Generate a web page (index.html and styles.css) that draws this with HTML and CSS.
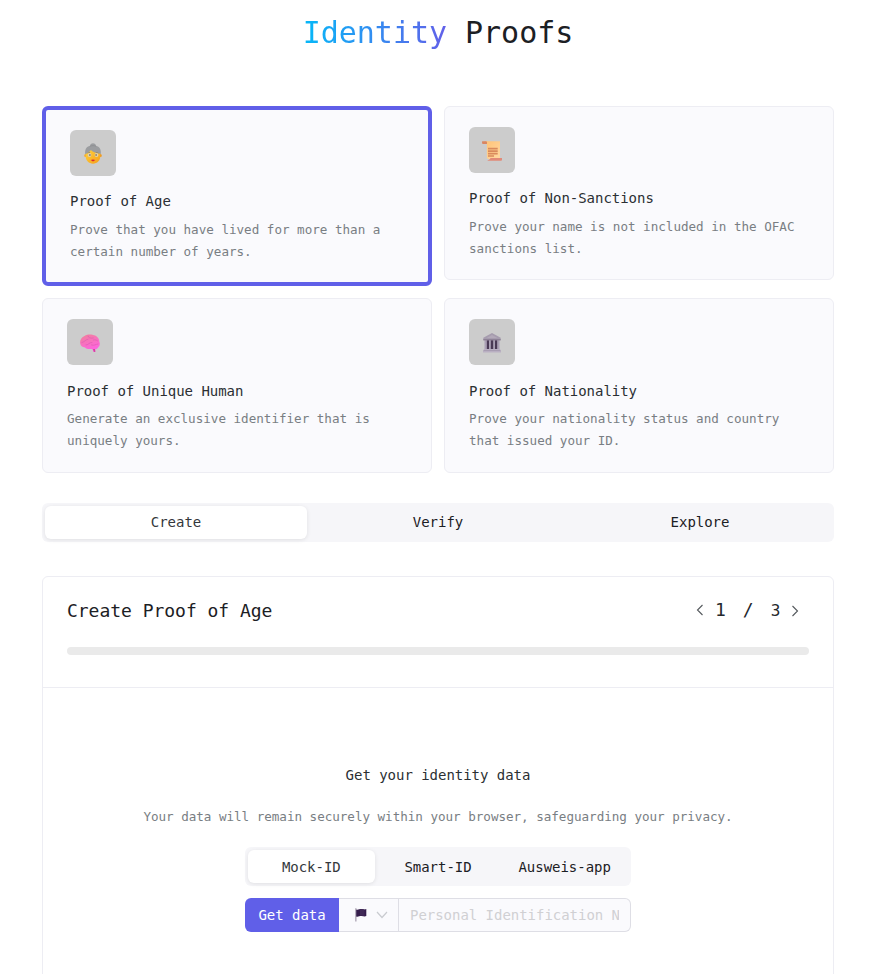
FILE: index.html
```html
<!DOCTYPE html>
<html lang="en">
<head>
<meta charset="utf-8">
<title>Identity Proofs</title>
<link rel="stylesheet" href="styles.css">
</head>
<body>
<main class="page">
  <h1 class="title"><span class="gradient">Identity</span> Proofs</h1>

  <section class="proofs">
    <article class="card selected">
      <div class="avatar">
        <svg width="20" height="22" viewBox="0 0 20 22">
          <defs><linearGradient id="face" x1="0" y1="0" x2="1" y2="1"><stop offset="0" stop-color="#ffd23c"/><stop offset="1" stop-color="#f59e1c"/></linearGradient></defs>
          <path d="M2.300 11.500C1.500 6.500 3.500 3.500 7 2.700 7.500 1 8.600.3 10 .3s2.500.7 3 2.400c3.500.8 5.500 3.800 4.700 8.800z" fill="#9b9da0"/>
          <path d="M7 3.200c2-.7 4-.7 6 0" fill="none" stroke="#88898d" stroke-width=".7"/>
          <ellipse cx="2.300" cy="12.400" rx="1" ry="1.500" fill="#f7a928"/><ellipse cx="17.700" cy="12.400" rx="1" ry="1.500" fill="#ef981e"/>
          <path d="M2.700 11C5 10.200 6.800 8.800 7.800 7c2.300 2.300 5.500 3.400 9.500 3.800v2.500c0 4.200-3.100 7.400-7.300 7.400s-7.300-3.200-7.300-7.400z" fill="url(#face)"/>
          <path d="M4.700 10.100l2.400-.7M12.900 9.400l2.400.7" stroke="#9c8b6a" stroke-width="1"/>
          <circle cx="6.500" cy="12" r="1.900" fill="#dfd2ae"/><circle cx="13.500" cy="12" r="1.900" fill="#dfd2ae"/>
          <circle cx="6.900" cy="12" r=".8" fill="#65513f"/><circle cx="13.100" cy="12" r=".8" fill="#65513f"/>
          <path d="M7.700 17l2.300-.6 2.300.6-2.300 1.400z" fill="#d82537"/>
        </svg>
      </div>
      <h2>Proof of Age</h2>
      <p>Prove that you have lived for more than a certain number of years.</p>
    </article>
    <article class="card">
      <div class="avatar">
        <svg width="20" height="22" viewBox="0 0 20 22">
          <defs><linearGradient id="paper" x1="0" y1="0" x2="1" y2="1"><stop offset="0" stop-color="#ffc274"/><stop offset="1" stop-color="#ffd8a2"/></linearGradient></defs>
          <path d="M2 1.200h16V19H6.500c-1 0-1.600-.6-1.600-1.700V4z" fill="url(#paper)"/>
          <path d="M.2 1.200h3.600c.8 0 1.200.6 1.200 1.300V4H1.500C.5 4 0 3.300 0 2.400z" fill="#d98663"/>
          <path d="M5 20.500c1 0 3.200-.9 3.500-2.500H20v1.400c0 .8-.5 1.400-1.300 1.400H6.500z" fill="#e18a78"/>
          <path d="M6 8.700h9.700M6 11.200h9.700M6 13.600h9.700M6 16h6" stroke="#d98a5c" stroke-width="1.700"/>
        </svg>
      </div>
      <h2>Proof of Non-Sanctions</h2>
      <p>Prove your name is not included in the OFAC sanctions list.</p>
    </article>
    <article class="card">
      <div class="avatar">
        <svg width="20" height="22" viewBox="0 0 20 22">
          <defs><linearGradient id="brain" x1="0" y1="0" x2=".4" y2="1"><stop offset="0" stop-color="#f08298"/><stop offset="1" stop-color="#ff62e3"/></linearGradient></defs>
          <path d="M.2 11.500C-.4 8 1.600 5 4.500 3.900 7 2.300 11.800 2.100 14 3.300c3 .5 5.200 3.200 5.300 6.200 1.100 2.200.5 4.800-1.400 6.200-.8 1.200-1.900 1.700-3 1.600l.5 2.500-1.600.3-1.700-3.200c-3.400.3-6.100 0-7-1.500C2.100 15.400.6 13.700.2 11.500z" fill="url(#brain)"/>
          <path d="M2 10.500c3-.7 3.500-3 6-3.300M8 4c.4 2 2.500 2.500 5.300 2M6 13c2 .6 2.600-2.600 6-2.600M11.500 13c3 .9 4-.7 6.500-1M13.500 8c2-.5 3 .1 4 .8" fill="none" stroke="#e060b4" stroke-width=".8" stroke-linecap="round"/>
          <path d="M13 16.900l2 .1.400 2.800-1.500.3z" fill="#d6409f"/>
        </svg>
      </div>
      <h2>Proof of Unique Human</h2>
      <p>Generate an exclusive identifier that is uniquely yours.</p>
    </article>
    <article class="card">
      <div class="avatar">
        <svg width="20" height="22" viewBox="0 0 20 22">
          <path d="M3 8h14v10H3z" fill="#75677f"/>
          <path d="M5 8h2v10H5zM9 8h2v10H9zM13 8h2v10h-2z" fill="#493955"/>
          <path d="M2.500 8h2.200v10H2.500zM7 8h1.700v10H7zM11.300 8H13v10h-1.700zM15.300 8h2.200v10h-2.200z" fill="#aaa0b5"/>
          <path d="M10 1l8.700 4.800v2.500H1.300V5.800z" fill="#a69cae"/>
          <path d="M10 2.900l5.500 3.200h-11z" fill="#b3a9b9"/><path d="M1.300 7.300h17.400v1H1.300z" fill="#85788d"/>
          <path d="M1.800 17h16.400v1.500H19v2H1v-2h.8z" fill="#b9afc2"/><path d="M1.500 18.500h17" stroke="#9c91a8" stroke-width=".6"/>
        </svg>
      </div>
      <h2>Proof of Nationality</h2>
      <p>Prove your nationality status and country that issued your ID.</p>
    </article>
  </section>

  <nav class="tabs main-tabs">
    <button class="tab active">Create</button>
    <button class="tab">Verify</button>
    <button class="tab">Explore</button>
  </nav>

  <section class="panel">
    <header class="panel-head">
      <div class="head-row">
        <h2>Create Proof of Age</h2>
        <div class="pager">
          <svg class="prev" width="8" height="12" viewBox="0 0 8 12"><path d="M6.500 1L1.500 6l5 5"/></svg>
          <span class="current">1</span><span class="slash">/</span><span class="total">3</span>
          <svg class="next" width="8" height="12" viewBox="0 0 8 12"><path d="M1.500 1l5 5-5 5"/></svg>
        </div>
      </div>
      <div class="progress"></div>
    </header>
    <div class="panel-body">
      <h3>Get your identity data</h3>
      <p>Your data will remain securely within your browser, safeguarding your privacy.</p>
      <div class="tabs sources">
        <button class="tab active">Mock-ID</button>
        <button class="tab">Smart-ID</button>
        <button class="tab">Ausweis-app</button>
      </div>
      <div class="id-form">
        <button class="submit">Get data</button>
        <div class="country">
          <svg width="12" height="14" viewBox="0 0 12 14"><path d="M.2.300h1.300v13.200H.2z" fill="#aaa2b2"/><path d="M1.200 1.500c2 .7 3.400-.8 5.400-.5 1.700.2 3 .8 4.700.1v7c-1.700.7-3 .1-4.700-.1-2-.3-3.400 1.200-5.400.5z" fill="#351d4c"/><path d="M5 1.200c2-.5 3.200.3 4.500.2v6.500C8 7.900 6.500 7.300 5 7.800z" fill="#402957"/></svg>
          <svg class="chevron" width="12" height="8" viewBox="0 0 12 8"><path d="M1 1l5 5.500L11 1"/></svg>
        </div>
        <input type="text" placeholder="Personal Identification Number">
      </div>
    </div>
  </section>
</main>
</body>
</html>
```
FILE: styles.css
```css
* { box-sizing: border-box; }

body {
  margin: 0;
  height: 974px;
  overflow: hidden;
  background: #fff;
  color: #1c2024;
  font-family: "DejaVu Sans Mono", "Liberation Mono", monospace;
  font-size: 14px;
  letter-spacing: -0.002em;
}

h1, h2, h3, p { margin: 0; font-weight: 400; }

button, input {
  font: inherit;
  letter-spacing: inherit;
  color: inherit;
  border: 0;
  padding: 0;
}

.page { width: 792px; margin-left: 42px; }

.title {
  height: 106px;
  padding-top: 13px;
  font-size: 30px;
  line-height: 40px;
  text-align: center;
}

.gradient {
  background: linear-gradient(90deg, #05b8f8, #625fe9);
  -webkit-background-clip: text;
  background-clip: text;
  color: transparent;
}

.proofs {
  display: grid;
  grid-template-columns: 390px 390px;
  grid-template-rows: 180px 175px;
  gap: 12px;
  align-items: start;
}

.card {
  height: 174px;
  padding: 20px 24px;
  border: 1px solid #ededf3;
  border-radius: 6px;
  background: #fafafd;
}

.card.selected { height: 180px; border: 4px solid #605fe8; }
.card:nth-child(n + 3) { height: 175px; }
.card:nth-child(n + 3) h2 { margin-top: 15px; }
.card:nth-child(n + 3) p { margin-top: 6px; }

.avatar {
  width: 46px;
  height: 46px;
  display: flex;
  align-items: center;
  justify-content: center;
  padding-top: 2px;
  border-radius: 6px;
  background: #ccc;
}

.card h2 { margin-top: 14px; font-size: 14px; line-height: 22px; color: #2b2f33; }
.card p { margin-top: 7px; font-size: 12.6px; line-height: 22px; letter-spacing: -0.001em; color: #797e83; }

.tabs {
  display: flex;
  height: 39px;
  margin-top: 30px;
  padding: 3px;
  border-radius: 6px;
  background: #f6f6f9;
}

.tab {
  flex: 1;
  height: 33px;
  border-radius: 6px;
  background: transparent;
  text-align: center;
}

.main-tabs .tab { padding-bottom: 2px; }
.tab.active { background: #fff; color: #34383c; box-shadow: 0 1px 4px #00000018; }

.panel {
  height: 420px;
  margin-top: 34px;
  border: 1px solid #ededf3;
  border-radius: 6px 6px 0 0;
}

.panel-head { height: 111px; padding: 20px 24px 0; border-bottom: 1px solid #ededf3; }
.head-row { display: flex; justify-content: space-between; height: 28px; }
.head-row h2 { font-size: 18px; line-height: 28px; }

.pager { display: flex; align-items: center; width: 113px; height: 26px; line-height: 26px; color: #24282c; }
.pager svg { fill: none; stroke: #54585c; stroke-width: 1.1; }
.current { margin-left: 11px; font-size: 18px; }
.slash { margin-left: 17px; font-size: 18px; }
.total { margin: 2px 0 0 17px; font-size: 16px; }
.next { margin: 2px 0 0 11px; }

.progress { height: 8px; margin-top: 22px; border-radius: 4px; background: #eaeaea; }

.panel-body {
  display: flex;
  flex-direction: column;
  align-items: center;
  padding-top: 76px;
}

.panel-body h3 { font-size: 14px; line-height: 22px; color: #2b2f33; }
.panel-body p { margin-top: 20px; font-size: 12.6px; line-height: 22px; color: #797e83; }

.sources { width: 386px; margin-top: 19px; }

.id-form {
  display: flex;
  width: 386px;
  height: 34px;
  margin-top: 12px;
}

.submit { width: 94px; border-radius: 6px 0 0 6px; background: #605fe8; color: #fff; }

.country {
  display: flex;
  align-items: center;
  width: 60px;
  padding-left: 16px;
  border: 1px solid #dedee5;
  border-left: 0;
  background: #fafafd;
}

.chevron { margin-left: 9px; fill: none; stroke: #c9cbd0; stroke-width: 1.2; }

.id-form input {
  width: 232px;
  padding: 0 11px;
  border: 1px solid #dedee5;
  border-left: 0;
  border-radius: 0 6px 6px 0;
  background: #fafafd;
}

.id-form input::placeholder { color: #d0d0d3; opacity: 1; }
```
